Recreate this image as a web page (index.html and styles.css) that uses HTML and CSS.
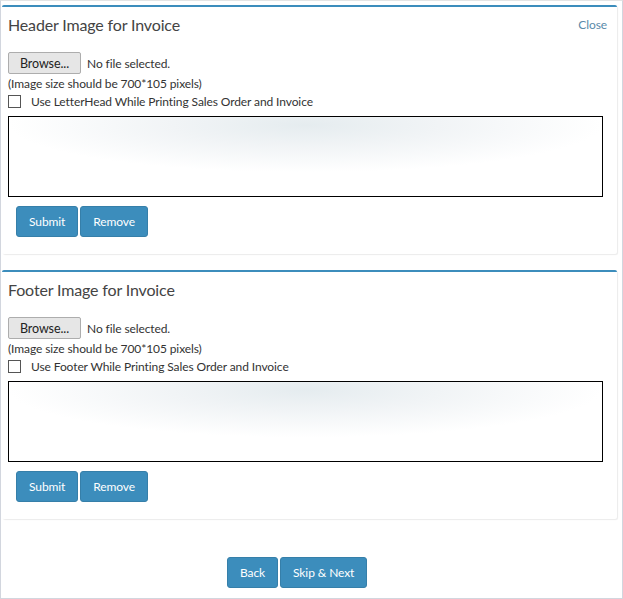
FILE: index.html
```html
<!DOCTYPE html>
<html>
<head>
<meta charset="utf-8">
<link rel="stylesheet" href="styles.css">
</head>
<body>
<div class="page">
  <section class="box">
    <div class="box-header">
      <h3 class="box-title">Header Image for Invoice</h3>
      <a class="close">Close</a>
    </div>
    <div class="box-body">
      <div class="file-row"><span class="browse">Browse...</span><span class="nofile">No file selected.</span></div>
      <div class="hint">(Image size should be 700*105 pixels)</div>
      <label class="check"><span class="cb"></span><span>Use LetterHead While Printing Sales Order and Invoice</span></label>
      <div class="preview"></div>
      <div class="actions"><button class="btn">Submit</button><button class="btn">Remove</button></div>
    </div>
  </section>
  <section class="box second">
    <div class="box-header">
      <h3 class="box-title">Footer Image for Invoice</h3>
    </div>
    <div class="box-body">
      <div class="file-row"><span class="browse">Browse...</span><span class="nofile">No file selected.</span></div>
      <div class="hint">(Image size should be 700*105 pixels)</div>
      <label class="check"><span class="cb"></span><span>Use Footer While Printing Sales Order and Invoice</span></label>
      <div class="preview"></div>
      <div class="actions"><button class="btn">Submit</button><button class="btn">Remove</button></div>
    </div>
  </section>
  <div class="nav"><button class="btn">Back</button><button class="btn">Skip &amp; Next</button></div>
</div>
</body>
</html>
```
FILE: styles.css
```css
html, body { margin: 0; padding: 0; background: #fff; }
body { font-family: Lato, "Open Sans", sans-serif; color: #333; font-size: 12px; letter-spacing: -0.1px; }
.page {
  width: 623px; height: 599px; box-sizing: border-box;
  border: 1px solid #d2d6de; border-top-color: #e4e4e4;
  padding-top: 4px;
}
.box {
  margin: 0 5px 0 1px;
  border-top: 2px solid #3c8dbc;
  border-radius: 2px;
  background: #fff;
  box-shadow: 1px 1px 1px rgba(0,0,0,0.08);
  height: 249px; box-sizing: border-box;
}
.box.second { margin-top: 16px; }
.box-header { display: flex; justify-content: space-between; align-items: flex-start; padding: 8px 10px 0 6px; height: 38px; box-sizing: border-box; }
.box-title { margin: 0; font-size: 16px; font-weight: normal; color: #444; line-height: 20px; letter-spacing: -0.15px; }
.close { color: #5a8aaa; font-size: 12px; line-height: 20px; }
.box-body { padding: 7px 6px 0 6px; }
.file-row { display: flex; align-items: center; height: 22px; }
.browse {
  display: inline-flex; align-items: center; justify-content: center;
  width: 73px; height: 22px; box-sizing: border-box;
  border: 1px solid #adadad; background: #e6e6e6; border-radius: 2px;
  color: #222; font-size: 12.5px;
}
.nofile { margin-left: 6px; color: #333; }
.hint { margin-top: 1px; line-height: 17px; }
.check { display: flex; align-items: center; height: 17px; margin-top: 1px; }
.cb { width: 11px; height: 11px; border: 1px solid #555; background: #fff; margin: 0 10px 0 0; }
.preview {
  margin-top: 6px; width: 595px; height: 81px; box-sizing: border-box;
  border: 1.5px solid #000;
  background: radial-gradient(ellipse 50% 60% at 50% 10%, #e5ecef 0%, #f1f4f6 45%, rgba(255,255,255,0) 100%), #fff;
}
.actions { display: flex; gap: 2px; margin: 9px 0 0 8px; }
.btn {
  font-family: Lato, "Open Sans", sans-serif; letter-spacing: -0.1px;
  font-size: 12px; color: #fff; background: #3c8dbc;
  border: 1px solid #367fa9; border-radius: 3px;
  height: 31px; padding: 0 12px; cursor: pointer;
}
.nav { display: flex; gap: 2px; padding: 38px 0 0 226px; }
```
